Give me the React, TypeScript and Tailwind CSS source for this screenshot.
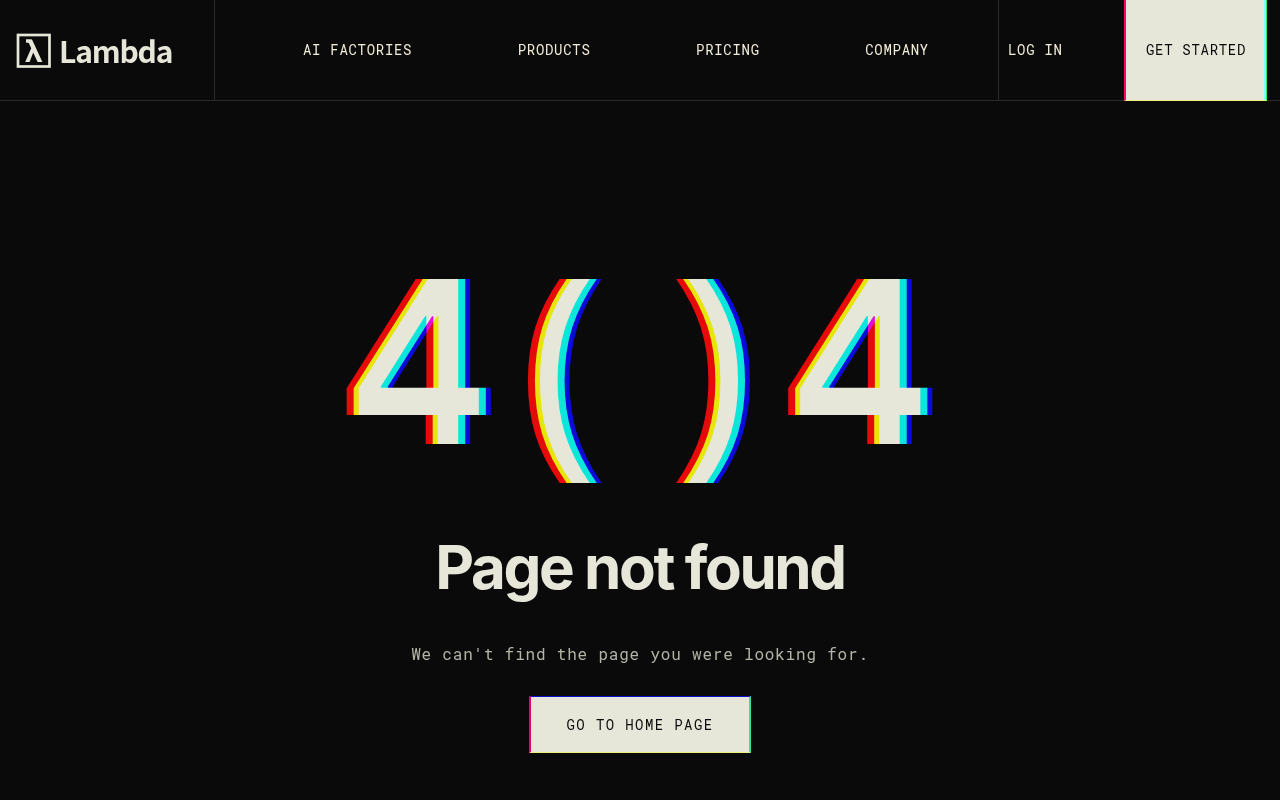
import React from 'react';

interface NavItem {
  label: string;
  href: string;
}

const NAV_ITEMS: NavItem[] = [
  { label: 'AI FACTORIES', href: '#ai-factories' },
  { label: 'PRODUCTS', href: '#products' },
  { label: 'PRICING', href: '#pricing' },
  { label: 'COMPANY', href: '#company' },
];

const Logo = () => (
  <a href="#home" className="flex items-center gap-2 text-[#e6e6d9]">
    <svg width="35" height="35" viewBox="0 0 35 35" fill="none" aria-hidden="true">
      <rect x="2" y="2" width="31.5" height="31.5" stroke="currentColor" strokeWidth="2.7" />
      <path
        d="M10 6.2H14.6C15.6 6.2 16.1 6.7 16.5 7.6L26.4 29H21.6L17.2 19.4L13.6 29H9.2L15.2 15.2L13 10.4C12.8 9.9 12.5 9.7 12 9.7H10Z"
        fill="currentColor"
      />
    </svg>
    <span className="font-['Noto_Sans_CJK_SC','Noto_Sans',sans-serif] text-[30px] leading-8 font-bold tracking-[-0.04em]">
      Lambda
    </span>
  </a>
);

const Header = () => (
  <header className="flex h-[101px] border-b border-[#2a2a2a] pr-[13px] text-sm tracking-wider text-[#f1ecd8]">
    <div className="flex w-[215px] shrink-0 items-center border-r border-[#2a2a2a] pl-4">
      <Logo />
    </div>
    <nav className="flex flex-1 items-center justify-between pr-[69px] pl-[88px]">
      {NAV_ITEMS.map((item) => (
        <a key={item.label} href={item.href}>
          {item.label}
        </a>
      ))}
    </nav>
    <div className="flex w-[126px] shrink-0 items-center border-l border-[#2a2a2a] pl-[9px]">
      <a href="#login">LOG IN</a>
    </div>
    <a
      href="#signup"
      className="-mb-px flex w-[143px] shrink-0 items-center justify-center border-r border-b border-l-2 border-r-[#2ee66b] border-b-[#f0f080] border-l-[#ff0066] bg-[#e6e6d9] text-[#0a0a0a] shadow-[inset_-2px_0_0_#80ffff]"
    >
      GET STARTED
    </a>
  </header>
);

interface GlitchProps {
  text: string;
  className?: string;
}

// One copy of the glyph per colour channel; where they overlap the channels add up
const Glitch = ({ text, className = '' }: GlitchProps) => (
  <span
    data-text={text}
    className={`relative text-[#00dc00] mix-blend-plus-lighter before:absolute before:top-0 before:-left-[7px] before:text-[#dc0000] before:mix-blend-plus-lighter before:content-[attr(data-text)] after:absolute after:top-0 after:left-[5px] after:text-[#0000cf] after:mix-blend-plus-lighter after:content-[attr(data-text)] ${className}`}
  >
    {text}
  </span>
);

const App = () => {
  return (
    <div className="min-h-screen bg-[#0a0a0a] font-['Roboto_Mono','Liberation_Mono',monospace]">
      <Header />
      <main className="flex flex-col items-center pt-[141px] pb-10 text-center">
        <div className="flex items-start font-['Inter',sans-serif] text-[227px] leading-[240px] font-bold">
          <Glitch text="4" />
          <Glitch text="(" className="ml-7 font-['Liberation_Sans',sans-serif] text-[219px]" />
          <Glitch text=")" className="ml-[86px] font-['Liberation_Sans',sans-serif] text-[219px]" />
          <Glitch text="4" className="ml-7" />
        </div>
        <h1 className="mt-[49px] font-['Inter',sans-serif] text-[60px] leading-[72px] font-bold tracking-[-0.04em] text-[#e6e6d9]">
          Page not found
        </h1>
        <p className="mt-[39px] text-base leading-6 tracking-wider text-[#b3b3a6]">
          We can't find the page you were looking for.
        </p>
        <a
          href="#home"
          className="mt-[30px] flex h-[57px] w-[222px] items-center justify-center border-t border-r-2 border-b border-l-2 border-t-[#1010d0] border-r-[#2ee69b] border-b-[#f0f080] border-l-[#e60073] bg-[#e6e6d9] text-sm tracking-widest text-[#0a0a0a]"
        >
          GO TO HOME PAGE
        </a>
      </main>
    </div>
  );
};

export default App;
